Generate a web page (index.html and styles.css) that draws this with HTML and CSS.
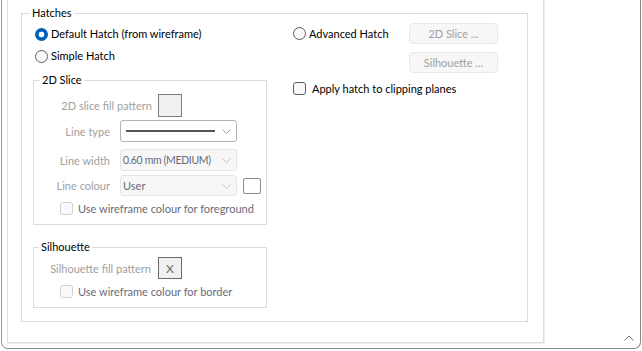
FILE: index.html
```html
<!DOCTYPE html>
<html>
<head>
<meta charset="utf-8">
<link rel="stylesheet" href="styles.css">
</head>
<body>
<div class="window">
  <div class="panel">
    <fieldset class="group hatches">
      <legend>Hatches</legend>
      <div class="cols">
        <div class="left">
          <label class="opt"><span class="radio on"></span>Default Hatch (from wireframe)</label>
          <label class="opt"><span class="radio"></span>Simple Hatch</label>

          <fieldset class="group sub slice">
            <legend>2D Slice</legend>
            <div class="frow r1">
              <span class="lbl wide">2D slice fill pattern</span>
              <span class="pat"></span>
            </div>
            <div class="frow r2">
              <span class="lbl">Line type</span>
              <span class="combo on"><span class="stroke"></span><svg class="chev" width="9" height="5" viewBox="0 0 9 5"><polyline points="0.5,0.5 4.5,4.5 8.5,0.5" fill="none" stroke="#9a9a9a" stroke-width="1"/></svg></span>
            </div>
            <div class="frow r3">
              <span class="lbl">Line width</span>
              <span class="combo"><span class="val mw">0.60 mm (MEDIUM)</span><svg class="chev" width="9" height="5" viewBox="0 0 9 5"><polyline points="0.5,0.5 4.5,4.5 8.5,0.5" fill="none" stroke="#c4c4c4" stroke-width="1"/></svg></span>
            </div>
            <div class="frow r4">
              <span class="lbl">Line colour</span>
              <span class="combo short"><span class="val">User</span><svg class="chev" width="9" height="5" viewBox="0 0 9 5"><polyline points="0.5,0.5 4.5,4.5 8.5,0.5" fill="none" stroke="#c4c4c4" stroke-width="1"/></svg></span>
              <span class="swatch"></span>
            </div>
            <label class="frow chk r5"><span class="box off"></span><span class="dtext">Use wireframe colour for foreground</span></label>
          </fieldset>

          <fieldset class="group sub sil">
            <legend>Silhouette</legend>
            <div class="frow s1">
              <span class="lbl wide2">Silhouette fill pattern</span>
              <span class="pat x">X</span>
            </div>
            <label class="frow chk s2"><span class="box off"></span><span class="dtext">Use wireframe colour for border</span></label>
          </fieldset>
        </div>

        <div class="right">
          <div class="rrow">
            <label class="ropt"><span class="radio"></span>Advanced Hatch</label>
            <button class="btn" disabled>2D Slice ...</button>
          </div>
          <div class="rrow second">
            <button class="btn" disabled>Silhouette ...</button>
          </div>
          <label class="apply"><span class="box"></span>Apply hatch to clipping planes</label>
        </div>
      </div>
    </fieldset>
  </div>
  <svg class="collapse" width="10" height="6" viewBox="0 0 10 6"><polyline points="0.5,5.5 5,1 9.5,5.5" fill="none" stroke="#707070" stroke-width="1"/></svg>
</div>
</body>
</html>
```

FILE: styles.css
```css
html, body {
  margin: 0;
  padding: 0;
}
body {
  width: 642px;
  height: 351px;
  overflow: hidden;
  background: #ffffff;
  font-family: Lato, "Liberation Sans", sans-serif;
  font-size: 11px;
  color: #000;
}
.window {
  position: relative;
  margin-left: 1px;
  width: 638px;
  height: 348px;
  border-left: 1px solid #9a9a9a;
  border-right: 1px solid #8a8a8a;
  border-bottom: 1px solid #8a8a8a;
  border-radius: 0 0 7px 7px;
  background: #fff;
}
.panel {
  margin-left: 5px;
  width: 537px;
  height: 343px;
  box-sizing: border-box;
  border: 1px solid #dedede;
  border-top: none;
  box-shadow: 1px 1px 0 #f0f0f0;
  padding-top: 5px;
}
fieldset.group {
  margin: 0;
  box-sizing: border-box;
  border: 1px solid #dcdcdc;
  min-width: 0;
}
fieldset.group > legend {
  padding: 0 2px;
  line-height: 16px;
  color: #000;
}
.hatches {
  margin-left: 13px !important;
  width: 507px;
  height: 317px;
  padding: 2px 0 0 11px;
}
.hatches > legend {
  margin-left: -3px;
}
.cols {
  display: grid;
  grid-template-columns: 234px 1fr;
  column-gap: 25px;
  align-items: start;
}
.left {
  display: flex;
  flex-direction: column;
}
.opt {
  display: flex;
  align-items: center;
  height: 22px;
  gap: 3px;
  padding-left: 2px;
  line-height: 16px;
  white-space: nowrap;
}
.radio {
  display: inline-block;
  box-sizing: border-box;
  width: 13px;
  height: 13px;
  border-radius: 50%;
  border: 1px solid #5c5c5c;
  background: #f9f9f9;
  flex: none;
}
.radio.on {
  border: none;
  background: radial-gradient(circle, #ffffff 0 2.6px, #005fb8 3.2px);
}
.sub {
  padding: 0;
  width: 234px;
}
.slice {
  margin-top: 5px !important;
  height: 153px;
}
.slice > legend {
  margin-left: 6px;
}
.sil {
  margin-top: 14px !important;
  height: 69px;
}
.sil > legend {
  margin-left: 5px;
}
.frow {
  display: flex;
  align-items: center;
  white-space: nowrap;
}
.lbl {
  width: 76px;
  text-align: right;
  color: #a0a0a0;
  margin-right: 10px;
  flex: none;
  white-space: nowrap;
}
.lbl.wide {
  width: 118px;
  margin-right: 6px;
}
.lbl.wide2 {
  width: 117px;
  margin-right: 7px;
}
.r1 { margin-top: 6px; height: 23px; }
.r2 { margin-top: 3px; height: 22px; }
.r3 { margin-top: 7px; height: 22px; }
.r4 { margin-top: 4px; height: 21px; }
.r5 { margin-top: 6px; height: 13px; }
.s1 { margin-top: 2px; height: 22px; }
.s2 { margin-top: 6px; height: 13px; }

.pat {
  box-sizing: border-box;
  width: 24px;
  height: 100%;
  border: 1px solid #7c7c7c;
  background: #f0f0f0;
  flex: none;
}
.pat.x {
  display: flex;
  align-items: center;
  justify-content: center;
  color: #6a6a6a;
  font-size: 12px;
  border-color: #6c6c6c;
}
.combo {
  position: relative;
  box-sizing: border-box;
  width: 117px;
  height: 100%;
  border: 1px solid #e6e6e6;
  border-radius: 3px;
  background: #f7f7f7;
  display: flex;
  align-items: center;
  padding-left: 2px;
  flex: none;
}
.combo.on {
  background: #fff;
  border-color: #b4b4b4;
  padding-left: 5px;
}
.stroke {
  display: block;
  width: 89px;
  height: 2px;
  background: #555;
}
.val {
  color: #6a6a78;
  line-height: 16px;
}
.val.mw {
  font-size: 10.5px;
  letter-spacing: -0.35px;
}
.chev {
  position: absolute;
  right: 5px;
  top: 50%;
  margin-top: -2px;
}
.swatch {
  box-sizing: border-box;
  width: 18px;
  height: 16px;
  margin-left: 6px;
  border: 1px solid #8a8a8a;
  border-radius: 2px;
  background: #fff;
  flex: none;
}
.chk {
  padding-left: 26px;
  gap: 5px;
}
.box {
  display: inline-block;
  box-sizing: border-box;
  width: 13px;
  height: 13px;
  border: 1px solid #5c5c5c;
  border-radius: 3px;
  background: #f9f9f9;
  flex: none;
}
.box.off {
  border-color: #d0d0d0;
  background: #fafafa;
}
.dtext {
  color: #6a6a78;
  line-height: 16px;
}
.right {
  display: flex;
  flex-direction: column;
}
.rrow {
  display: flex;
  align-items: center;
  height: 21px;
}
.rrow.second {
  margin-top: 8px;
  padding-left: 117px;
}
.ropt {
  display: flex;
  align-items: center;
  gap: 3px;
  width: 116px;
  margin-left: 1px;
  white-space: nowrap;
}
.btn {
  box-sizing: border-box;
  width: 89px;
  height: 21px;
  margin: 0;
  padding: 0;
  border: 1px solid #e8e8e8;
  border-radius: 4px;
  background: #f7f7f7;
  color: #a0a0a0;
  font-family: inherit;
  font-size: 11px;
}
.apply {
  display: flex;
  align-items: center;
  gap: 6px;
  margin-top: 9px;
  margin-left: 1px;
  height: 13px;
  white-space: nowrap;
}
.collapse {
  position: absolute;
  right: 6px;
  bottom: 7px;
}
```
